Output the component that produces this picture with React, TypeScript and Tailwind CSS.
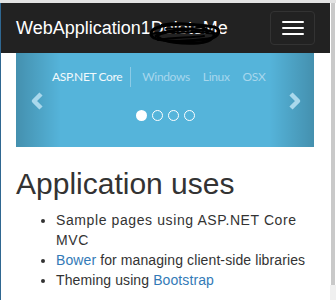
const tabs = ['Windows', 'Linux', 'OSX']

function Scribble() {
  return (
    <svg className="absolute left-[132px] top-[3px]" width="76" height="26" viewBox="0 0 76 26" fill="none" stroke="#000" strokeLinecap="round">
      <path d="M4 10 C10 2, 40 2, 66 6 C74 8, 72 16, 60 18 C40 21, 15 21, 6 17 C1 14, 2 8, 12 6" strokeWidth="3" />
      <path d="M8 15 C20 8, 45 7, 62 10 C70 12, 66 21, 50 22 C35 23, 15 21, 10 16" strokeWidth="2.8" />
      <path d="M14 4 C30 1, 50 3, 58 8" strokeWidth="2.4" />
      <path d="M3 13 C12 10, 30 13, 44 11 C54 10, 62 14, 70 12" strokeWidth="2.2" />
      <path d="M10 19 C24 16, 40 17, 56 15" strokeWidth="2" />
      <path d="M18 8 C30 6, 44 9, 54 6" strokeWidth="1.8" />
    </svg>
  )
}

function Chevron({ dir }: { dir: 'left' | 'right' }) {
  return (
    <svg width="14" height="18" viewBox="0 0 14 18" fill="none">
      <polyline
        points={dir === 'left' ? '11,2 4,9 11,16' : '3,2 10,9 3,16'}
        stroke="#a9d8ec"
        strokeWidth="4.5"
        strokeLinejoin="round"
      />
    </svg>
  )
}

export default function App() {
  return (
    <div className="w-[336px] h-[300px] overflow-hidden bg-white flex flex-col" style={{ fontFamily: '"Liberation Sans", Arial, sans-serif' }}>
      <div className="h-[3px] bg-[#e3e3e3] shrink-0" />
      <div className="flex flex-1 min-h-0">
        <div className="w-px shrink-0 bg-[#2f6791]" />
        <div className="w-[329px] shrink-0 flex flex-col">
          {/* navbar */}
          <div className="h-[50px] bg-[#222] flex items-center justify-between pl-[15px] pr-[15px] shrink-0">
            <div className="relative text-white text-[18px] leading-[20px]">
              WebApplication1DeleteMe
              <Scribble />
            </div>
            <button className="w-[45px] h-[34px] rounded border border-[#333] flex flex-col items-center justify-center gap-[4px]">
              <span className="block w-[22px] h-[2px] bg-white rounded-[1px]" />
              <span className="block w-[22px] h-[2px] bg-white rounded-[1px]" />
              <span className="block w-[22px] h-[2px] bg-white rounded-[1px]" />
            </button>
          </div>

          <div className="px-[15px]">
            {/* carousel */}
            <div className="relative h-[94px] w-[298px] bg-[#55b4da] overflow-hidden">
              <div className="absolute inset-y-0 left-0 w-[45px] bg-gradient-to-r from-[#00000033] to-transparent" />
              <div className="absolute inset-y-0 right-0 w-[45px] bg-gradient-to-l from-[#00000033] to-transparent" />
              <div className="relative flex items-center whitespace-nowrap pl-[36px] pt-[14px] h-[34px] text-[12px] tracking-[-0.35px]" style={{ fontFamily: 'Lato, sans-serif' }}>
                <span className="shrink-0 text-[#f2f9fc]">ASP.NET Core</span>
                <span className="shrink-0 w-px h-[20px] bg-[#8ccbe6] ml-[8px] mr-[11px]" />
                {tabs.map(t => (
                  <span key={t} className="shrink-0 text-[#a7d7ed] mr-[13px]">{t}</span>
                ))}
              </div>
              <div className="absolute left-[14px] top-[39px]"><Chevron dir="left" /></div>
              <div className="absolute left-[272px] top-[39px]"><Chevron dir="right" /></div>
              <div className="absolute left-[120px] top-[57px] flex items-center gap-[5px]">
                <span className="w-[11px] h-[11px] rounded-full bg-white" />
                <span className="w-[11px] h-[11px] rounded-full border border-white" />
                <span className="w-[11px] h-[11px] rounded-full border border-white" />
                <span className="w-[11px] h-[11px] rounded-full border border-white" />
              </div>
            </div>

            <h2 className="mt-[20px] mb-[10px] text-[30px] leading-[33px] text-[#333]">Application uses</h2>
            <ul className="list-disc pl-[40px] text-[14px] leading-[20px] text-[#333]">
              <li className="tracking-[0.6px]">Sample pages using ASP.NET Core MVC</li>
              <li className="tracking-[0.1px]"><span className="text-[#337ab7]">Bower</span> for managing client-side libraries</li>
              <li className="tracking-[0.1px]">Theming using <span className="text-[#337ab7]">Bootstrap</span></li>
            </ul>
          </div>
        </div>
        <div className="w-[6px] shrink-0 flex flex-col">
          <div className="h-[282px] bg-[#c9c9c9] ml-[1px] mr-[1px]" />
          <div className="flex-1 bg-[#f0f0f0]" />
        </div>
      </div>
    </div>
  )
}
